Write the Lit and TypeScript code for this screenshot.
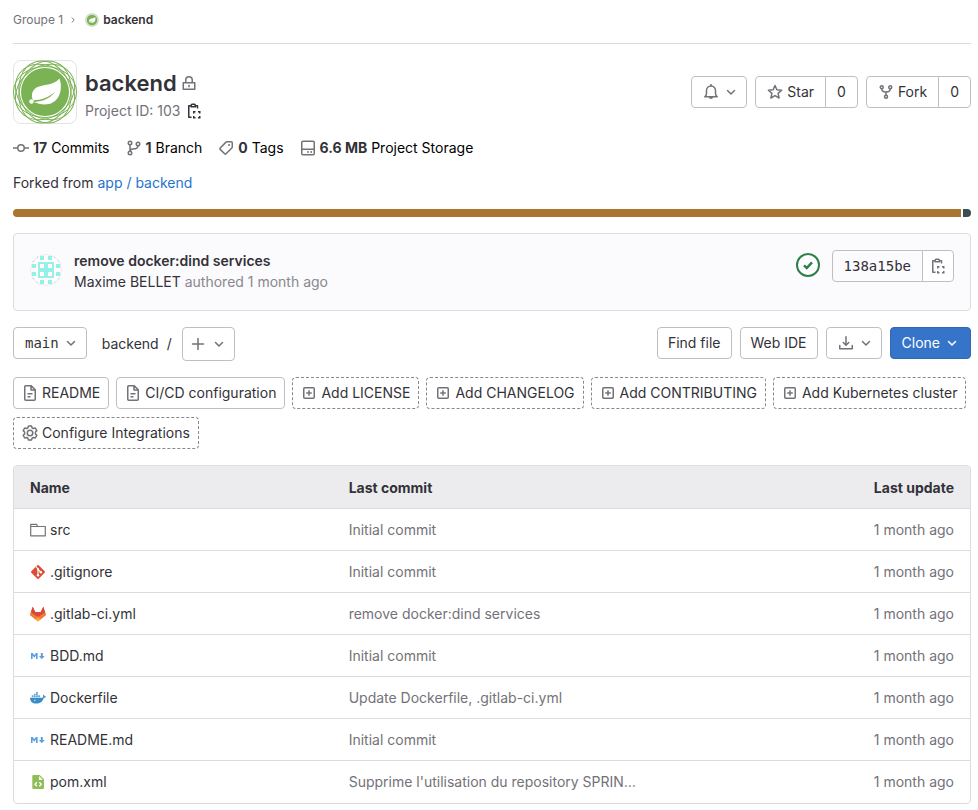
import { LitElement, html, svg, css, TemplateResult } from "lit";
import { customElement, property } from "lit/decorators.js";

const icons: Record<string, TemplateResult> = {
  "chevron-down": svg`<path class="s" stroke-width="1.5" stroke-linecap="round" stroke-linejoin="round" d="M4.5 6.5 8 10l3.500-3.500"/>`,
  "chevron-right": svg`<path class="s" stroke-width="1.500" stroke-linecap="round" stroke-linejoin="round" d="M6.500 4.500 10 8l-3.500 3.500"/>`,
  lock: svg`<path class="s" stroke-width="1.5" stroke-linejoin="round" d="M2.250 7.750h11.500v6.500H2.250zM4.750 7.500V5a3.250 3.250 0 0 1 6.500 0v2.500"/><path class="f" d="M7.250 9.750h1.500v2.500h-1.500z"/>`,
  copy: svg`<path class="s" stroke-width="1.5" stroke-linejoin="round" d="M5 2.750H2.750v11.500H5.500M9.500 2.750h2V5.500"/><path class="f" d="M4.500 2A1.500 1.500 0 0 1 6 .5h2.500A1.500 1.500 0 0 1 10 2v2.500H4.500zM6 2v1h2.500V2z"/><path class="s" stroke-width="1.5" stroke-dasharray="3.500 2.500" stroke-dashoffset="1.750" d="M7.750 8.750h6v6h-6z"/>`,
  bell: svg`<path class="s" stroke-width="1.5" stroke-linejoin="round" d="M1.750 12.750h12.500c-1.250-.900-1.750-2-1.750-3.500V6.500a4.500 4.500 0 0 0-9 0v2.750c0 1.500-.500 2.600-1.750 3.500z"/><path class="f" d="M7.250 0h1.500v2h-1.500zM6 13h4a2 2 0 0 1-4 0z"/>`,
  star: svg`<path class="s" stroke-width="1.500" stroke-linejoin="round" d="m8 1.500 1.900 4.300 4.700.5-3.500 3.100 1 4.600L8 11.600 3.900 14l1-4.600L1.400 6.300l4.700-.5z"/>`,
  fork: svg`<g class="s" stroke-width="1.500"><circle cx="3.750" cy="3.250" r="1.500"/><circle cx="12.250" cy="3.250" r="1.500"/><circle cx="8" cy="12.750" r="1.500"/><path d="M3.750 4.750c0 2.500 1.750 3.250 4.250 3.250s4.250-.750 4.250-3.250M8 8v3.250"/></g>`,
  commit: svg`<g class="s" stroke-width="1.500"><circle cx="8" cy="8" r="3.250"/><path d="M0 8h4.750M11.250 8H16"/></g>`,
  branch: svg`<g class="s" stroke-width="1.500"><circle cx="4" cy="3" r="1.750"/><circle cx="12" cy="4" r="1.750"/><circle cx="4" cy="13" r="1.750"/><path d="M4 4.750v6.500M12 5.750c0 3-2.500 3.250-5 3.250-1.750 0-3 .500-3 2.250"/></g>`,
  tag: svg`<path class="s" stroke-width="1.500" stroke-linejoin="round" d="M9 1.750h4.250c.550 0 1 .450 1 1V7c0 .400-.150.750-.400 1l-5.800 5.800a1 1 0 0 1-1.400 0L2.200 9.350a1 1 0 0 1 0-1.400L8 2.150c.300-.250.600-.400 1-.400z"/><circle class="f" cx="11" cy="5" r="1"/>`,
  disk: svg`<rect class="s" stroke-width="1.500" x="1.750" y="1.250" width="12.500" height="13.500" rx="1.250"/><path class="s" stroke-width="1.500" d="M1.750 9.250h12.500"/><circle class="f" cx="8" cy="12" r=".9"/><circle class="f" cx="11.250" cy="12" r=".9"/>`,
  plus: svg`<path class="s" stroke-width="1.500" stroke-linecap="round" d="M8 2.500v11M2.500 8h11"/>`,
  download: svg`<path class="s" stroke-width="1.500" stroke-linecap="round" stroke-linejoin="round" d="M8 1.750V10M5.250 7.500 8 10.250l2.750-2.750M1.750 10.500v3.250h12.500V10.500"/>`,
  doc: svg`<path class="s" stroke-width="1.500" stroke-linejoin="round" d="M3.750.750h5.500l4 4v9.500a1 1 0 0 1-1 1h-8.500a1 1 0 0 1-1-1v-12.500a1 1 0 0 1 1-1zM9 1v4h4M5.500 8.750h5M5.500 11.750h3"/>`,
  add: svg`<rect class="s" stroke-width="1.500" x="2.750" y="2.750" width="10.500" height="10.500" rx="1"/><path class="s" stroke-width="1.500" d="M8 5.250v5.500M5.250 8h5.500"/>`,
  gear: svg`<path class="s" stroke-width="1.500" stroke-linejoin="round" d="M6.500.900h3l.600 1.900 1.200.700 2-.500 1.500 2.600-1.400 1.400v2l1.400 1.400-1.500 2.600-2-.500-1.200.700-.600 1.900h-3l-.600-1.900-1.200-.700-2 .500L1.200 10.400l1.400-1.400V7L1.200 5.600 2.700 3l2 .500 1.200-.700z"/><circle class="s" stroke-width="1.500" cx="8" cy="8" r="2.750"/>`,
  folder: svg`<path class="s" stroke-width="1.200" stroke-linejoin="round" d="M.7 13.800V2.300h5.800l1.200 2.200h7.600v9.300zM.7 4.500h7.300"/>`,
  git: svg`<path fill="#dd4c35" d="M8.700 1.300a1 1 0 0 0-1.400 0L1.300 7.300a1 1 0 0 0 0 1.400l6 6a1 1 0 0 0 1.400 0l6-6a1 1 0 0 0 0-1.400z"/><path fill="none" stroke="#fff" stroke-width="1.100" d="M6 2.500 8 5v6.500M8 5.500l2.800 2.500"/><circle fill="#fff" cx="8" cy="5.200" r="1.100"/><circle fill="#fff" cx="8" cy="11.300" r="1.200"/><circle fill="#fff" cx="10.900" cy="8.200" r="1.200"/>`,
  gitlab: svg`<path fill="#e65328" d="M2.700.8 5.200 6h5.600L13.300.8 15.900 9 8 15.200.1 9z"/><path fill="#d84a38" d="M.9 6.300 2.700.8 5.200 6h5.600L13.300.8l1.800 5.500L11 10H5z"/><path fill="#f37a35" d="M.1 9 .9 6.300 5.500 9.500 8 11l2.500-1.500 4.600-3.200.8 2.700L8 15.200z"/><path fill="#f9a53f" d="m5.500 13.200 2.500-1.900 2.500 1.900L8 15.500z"/>`,
  markdown: svg`<path fill="#5b9fe3" d="M1 11V5h1.700l1.600 2.200L5.900 5h1.700v6H6V7.600L4.300 9.700 2.600 7.600V11zM10.800 5h2v3h1.900l-2.900 3.200L8.900 8h1.900z"/>`,
  docker: svg`<path fill="#3c8bc9" d="M0 7.700h12.200c.500 0 .900-.200 1.200-.500-.5-.900-.4-1.900.1-2.600.6.400 1 1 1 1.700.5-.1 1.100 0 1.500.3-.3.900-1.100 1.300-2.200 1.300C12.600 11.800 10 13.500 6.300 13.500 2.400 13.500.2 11.700 0 7.700z"/><path fill="#62a6d8" d="M1.700 5.300h1.800v1.900H1.700zM3.900 5.300h1.800v1.900H3.900zM6.100 5.300h1.800v1.900H6.100zM8.300 5.300h1.800v1.900H8.300zM3.900 3.800h1.800v1.100H3.900zM6.100 3.800h1.800v1.100H6.100zM6.100 2h1.800v1.400H6.100z"/><circle cx="4.800" cy="10.400" r=".6" fill="#fff"/>`,
  xml: svg`<path fill="#8fbe58" d="M3.500 1h6.200L14 5.300v8.500a1.200 1.200 0 0 1-1.200 1.200H3.500a1.200 1.200 0 0 1-1.200-1.200V2.200A1.200 1.200 0 0 1 3.500 1z"/><path fill="#fff" d="M9 2v4h4z"/><path fill="none" stroke="#fff" stroke-width="1.300" d="M6.900 8.300 5 10.300l1.900 2M9.400 8.300l1.900 2-1.900 2"/>`,
};

@customElement("gl-icon")
export class GlIcon extends LitElement {
  static styles = css`
    :host { display: inline-flex; flex: none; width: 16px; height: 16px; color: #737278; }
    svg { width: 100%; height: 100%; display: block; }
    .s { fill: none; stroke: currentColor; }
    .f { fill: currentColor; }
  `;
  @property() name = "";
  render() {
    return html`<svg viewBox="0 0 16 16" aria-hidden="true">${icons[this.name]}</svg>`;
  }
}

@customElement("spring-logo")
export class SpringLogo extends LitElement {
  static styles = css`
    :host { display: block; flex: none; }
    svg { width: 100%; height: 100%; display: block; }
  `;
  @property({ type: Boolean }) small = false;
  render() {
    const rings = [0, 36, 72, 108, 144].map(
      (a) => svg`<ellipse cx="32" cy="32" rx="31.500" ry="25.500" fill="none" stroke="#7ab254" stroke-width="1" transform="rotate(${a} 32 32)"/>`
    );
    return html`<svg viewBox="0 0 64 64" aria-hidden="true">
      ${this.small ? svg`<circle cx="32" cy="32" r="32" fill="#d6e0d0"/>` : rings}
      <circle cx="32" cy="32" r="24" fill="#7ab254"/>
      <path fill="#fff" d="M46.500 18.500c3.500 10 .500 23-10.500 25.500-6 1.300-11-.500-15.500-2 7-.300 16-2.500 22-10.500-6.500 6-14 8.500-22.300 8.800-2.400-4.300-1.500-9.800 3.300-12.800 6.500-3.600 16.500-1.500 23-9z"/>
      <circle cx="18.500" cy="41.500" r="2.200" fill="#fff"/>
    </svg>`;
  }
}

interface Entry { icon: string; name: string; commit: string; }

const entries: Entry[] = [
  { icon: "folder", name: "src", commit: "Initial commit" },
  { icon: "git", name: ".gitignore", commit: "Initial commit" },
  { icon: "gitlab", name: ".gitlab-ci.yml", commit: "remove docker:dind services" },
  { icon: "markdown", name: "BDD.md", commit: "Initial commit" },
  { icon: "docker", name: "Dockerfile", commit: "Update Dockerfile, .gitlab-ci.yml" },
  { icon: "markdown", name: "README.md", commit: "Initial commit" },
  { icon: "xml", name: "pom.xml", commit: "Supprime l'utilisation du repository SPRIN…" },
];

const stats = [
  { icon: "commit", value: "17", label: "Commits" },
  { icon: "branch", value: "1", label: "Branch" },
  { icon: "tag", value: "0", label: "Tags" },
  { icon: "disk", value: "6.6 MB", label: "Project Storage" },
];

const shortcuts = [
  { icon: "doc", label: "README", dashed: false },
  { icon: "doc", label: "CI/CD configuration", dashed: false },
  { icon: "add", label: "Add LICENSE", dashed: true },
  { icon: "add", label: "Add CHANGELOG", dashed: true },
  { icon: "add", label: "Add CONTRIBUTING", dashed: true },
  { icon: "add", label: "Add Kubernetes cluster", dashed: true },
  { icon: "gear", label: "Configure Integrations", dashed: true },
];

// The commit author's identicon: a 4x4 grid of 8px cells. Centre cells are
// solid with a hole, edge cells carry a dot, corner cells a pair of triangles.
const identiconCell = (x: number, y: number) => {
  const inX = x === 1 || x === 2;
  const inY = y === 1 || y === 2;
  const px = x * 8;
  const py = y * 8;
  if (inX && inY) {
    return svg`<rect x=${px} y=${py} width="8" height="8" fill="#97f0e8"/><rect x=${px + 2} y=${py + 2} width="4" height="4" fill="#fff"/>`;
  }
  if (inX || inY) {
    return svg`<rect x=${px + 2} y=${py + 2} width="4" height="4" fill="#97f0e8"/>`;
  }
  const turn = x === y ? 0 : 90;
  return svg`<path transform="rotate(${turn} ${px + 4} ${py + 4})" d="M${px} ${py + 8}v-5l5 5zM${px + 8} ${py}v5l-5-5z" fill="#97f0e8"/>`;
};

@customElement("app-root")
export class AppRoot extends LitElement {
  static styles = css`
    :host {
      display: block;
      padding: 0 7px 6px 13px;
      background: #fff;
      color: #333238;
      font: 14px/20px Inter, "Liberation Sans", sans-serif;
    }
    * { box-sizing: border-box; }
    a { color: inherit; text-decoration: none; }
    .crumbs {
      display: flex; align-items: center; height: 44px; padding-bottom: 4px;
      border-bottom: 1px solid #dcdcde; font-size: 12px; line-height: 16px; color: #737278;
    }
    .crumbs gl-icon { width: 10px; height: 10px; margin: 0 7px 0 5px; }
    .crumbs spring-logo { width: 14px; height: 14px; margin-right: 4px; }
    .crumbs .here { color: #333238; font-weight: 600; }
    .project { display: flex; align-items: center; margin-top: 16px; height: 64px; }
    .avatar { width: 64px; height: 64px; border: 1px solid #e4e4e6; border-radius: 8px; }
    .avatar spring-logo { width: 64px; height: 64px; margin: -1px; }
    .ident { margin-left: 8px; padding-top: 6px; flex: 1; }
    h1 { display: flex; align-items: center; gap: 4px; margin: 0; font-size: 22px; line-height: 32px; font-weight: 600; }
    .pid { display: flex; align-items: center; gap: 6px; line-height: 24px; color: #737278; }
    .pid gl-icon { color: #333238; }
    .actions { display: flex; gap: 8px; }
    button, .btn {
      display: inline-flex; align-items: center; justify-content: center; height: 32px; margin: 0; padding: 0 11px;
      border: 1px solid #bfbfc3; border-radius: 4px; background: #fff; color: #333238;
      font: inherit; line-height: 16px; white-space: nowrap; cursor: pointer;
    }
    .group { display: flex; }
    .group > :first-child { border-radius: 4px 0 0 4px; }
    .group > :last-child { border-radius: 0 4px 4px 0; margin-left: -1px; }
    .star > :first-child { gap: 4px; }
    .drop { gap: 4px; padding-right: 7px; }
    .stats { display: flex; gap: 16px; margin-top: 14px; color: #000; }
    .stats a { display: flex; align-items: center; gap: 4px; }
    .stats b { color: #333238; font-weight: 700; }
    .forked { margin: 15px 0 0; }
    .forked a { color: #1f75cb; }
    .langs { display: flex; gap: 2px; height: 8px; margin-top: 16px; border-radius: 4px; overflow: hidden; }
    .java { flex: 1; background: #aa752f; }
    .dockerfile { width: 8px; background: #384d54; }
    .commit {
      display: flex; align-items: flex-start; margin-top: 16px; height: 78px; padding: 16px;
      border: 1px solid #dcdcde; border-radius: 4px; background: #fbfafd;
    }
    .commit .face { width: 32px; height: 32px; margin: 4px 12px 0 0; border-radius: 16px; flex: none; }
    .commit .text { flex: 1; line-height: 21px; }
    .commit strong { display: block; font-weight: 600; }
    .muted { color: #89888d; }
    .ok { width: 24px; height: 24px; margin: 3px 12px 0 0; }
    .sha > span, .mono { font-family: "DejaVu Sans Mono", "Liberation Mono", monospace; }
    .sha > span { background: transparent; cursor: default; }
    .sha > button { padding: 0 7px; }
    .tree-bar { display: flex; align-items: flex-start; margin-top: 16px; height: 34px; }
    .path { display: flex; gap: 8px; margin: 7px 10px 0 15px; }
    .new { height: 34px; gap: 5px; padding: 0 7px; }
    .tree-bar .actions { margin-left: auto; }
    .plain { padding: 0 10px; }
    .clone { padding-right: 10px; background: #3574c8; border-color: #2f68b4; color: #fff; }
    .clone gl-icon { color: #fff; }
    .shortcuts { display: flex; flex-wrap: wrap; gap: 8px 7px; margin-top: 16px; }
    .shortcuts .btn { gap: 4px; padding: 0 8px; }
    .shortcuts .dashed { border-style: dashed; border-color: #89888d; }
    table {
      width: 100%; margin-top: 16px; table-layout: fixed; border-collapse: separate; border-spacing: 0;
      border: 1px solid #dcdcde; border-radius: 4px; overflow: hidden;
    }
    th { height: 43px; padding: 2px 16px 0; text-align: left; font-weight: 700; background: #ececef; }
    th:first-child { width: calc(100% / 3); }
    th:last-child { width: 30%; }
    td { height: 42px; padding: 0 16px; color: #737278; white-space: nowrap; overflow: hidden; text-overflow: ellipsis; }
    th, td { border-bottom: 1px solid #dcdcde; }
    tr:last-child td { border-bottom: 0; }
    thead tr:last-child th { border-bottom: 1px solid #dcdcde; }
    th.when, td.when { text-align: right; }
    .file { display: flex; align-items: center; gap: 4px; color: #333238; }
  `;

  render() {
    return html`
      <nav class="crumbs" aria-label="Breadcrumbs">
        <a href="#">Groupe 1</a><gl-icon name="chevron-right"></gl-icon>
        <spring-logo small></spring-logo><a class="here" href="#">backend</a>
      </nav>

      <header class="project">
        <div class="avatar"><spring-logo></spring-logo></div>
        <div class="ident">
          <h1>backend <gl-icon name="lock"></gl-icon></h1>
          <div class="pid">Project ID: 103 <gl-icon name="copy"></gl-icon></div>
        </div>
        <div class="actions">
          <button class="drop" aria-label="Notifications"><gl-icon name="bell"></gl-icon><gl-icon name="chevron-down"></gl-icon></button>
          <div class="group star"><button><gl-icon name="star"></gl-icon>Star</button><a class="btn" href="#">0</a></div>
          <div class="group star"><button><gl-icon name="fork"></gl-icon>Fork</button><a class="btn" href="#">0</a></div>
        </div>
      </header>

      <nav class="stats" aria-label="Project statistics">
        ${stats.map((s) => html`<a href="#"><gl-icon name=${s.icon}></gl-icon><span><b>${s.value}</b> ${s.label}</span></a>`)}
      </nav>
      <p class="forked">Forked from <a href="#">app / backend</a></p>
      <div class="langs"><div class="java"></div><div class="dockerfile"></div></div>

      <section class="commit">
        <svg class="face" viewBox="0 0 32 32" aria-hidden="true">
          <rect width="32" height="32" fill="#fff"/>
          ${[0, 1, 2, 3].map((y) => [0, 1, 2, 3].map((x) => identiconCell(x, y)))}
          <circle cx="16" cy="16" r="15.500" fill="none" stroke="#e6e6ea"/>
        </svg>
        <div class="text">
          <strong><a href="#">remove docker:dind services</a></strong>
          <a href="#">Maxime BELLET</a> <span class="muted">authored 1 month ago</span>
        </div>
        <svg class="ok" viewBox="0 0 24 24" role="img" aria-label="Passed">
          <circle cx="12" cy="12" r="11" fill="#fff" stroke="#2d8049" stroke-width="2"/>
          <path d="m8 12.300 2.800 2.700 5.200-5.700" fill="none" stroke="#2d8049" stroke-width="2.500"/>
        </svg>
        <div class="group sha"><span class="btn">138a15be</span><button aria-label="Copy commit SHA"><gl-icon name="copy"></gl-icon></button></div>
      </section>

      <div class="tree-bar">
        <button class="drop mono">main <gl-icon name="chevron-down"></gl-icon></button>
        <div class="path"><a href="#">backend</a><span>/</span></div>
        <button class="new" aria-label="Add to tree"><gl-icon name="plus"></gl-icon><gl-icon name="chevron-down"></gl-icon></button>
        <div class="actions">
          <button class="plain">Find file</button>
          <button class="plain">Web IDE</button>
          <button class="drop" aria-label="Download"><gl-icon name="download"></gl-icon><gl-icon name="chevron-down"></gl-icon></button>
          <button class="drop clone">Clone <gl-icon name="chevron-down"></gl-icon></button>
        </div>
      </div>

      <nav class="shortcuts" aria-label="Project shortcuts">
        ${shortcuts.map((s) => html`<a class="btn ${s.dashed ? "dashed" : ""}" href="#"><gl-icon name=${s.icon}></gl-icon>${s.label}</a>`)}
      </nav>

      <table>
        <thead><tr><th>Name</th><th>Last commit</th><th class="when">Last update</th></tr></thead>
        <tbody>
          ${entries.map((e) => html`<tr>
            <td><a class="file" href="#"><gl-icon name=${e.icon}></gl-icon>${e.name}</a></td>
            <td><a href="#">${e.commit}</a></td>
            <td class="when">1 month ago</td>
          </tr>`)}
        </tbody>
      </table>
    `;
  }
}
